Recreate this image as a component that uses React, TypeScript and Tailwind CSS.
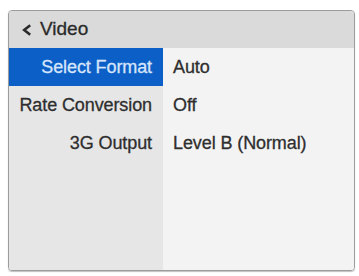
const rows = [
  { label: 'Select Format', value: 'Auto', selected: true },
  { label: 'Rate Conversion', value: 'Off' },
  { label: '3G Output', value: 'Level B (Normal)' },
]

export default function App() {
  return (
    <div
      className="h-[276px] w-[359px] bg-white pl-[8px] pt-[10px]"
      style={{ fontFamily: '"Liberation Sans", Arial, sans-serif' }}
    >
      <div className="flex h-[261px] w-[347px] flex-col overflow-hidden rounded-[4px] border border-[#9c9c9c] shadow-[0_1px_1px_rgba(0,0,0,0.25)] [-webkit-text-stroke:0.3px_currentColor]">
        <div className="flex h-[37px] shrink-0 items-center gap-[8px] bg-[#dadada] pl-[13px] text-[19px] text-[#2a2a2a]">
          <svg width="10" height="12" viewBox="0 0 10 12" fill="none" aria-hidden="true">
            <path d="M8.2 1.3 2.2 6l6 4.7" stroke="#2a2a2a" strokeWidth="2.6" />
          </svg>
          <span>Video</span>
        </div>
        <div className="flex flex-1">
          <div className="flex w-[154px] flex-col bg-[#e6e6e6]">
            {rows.map((r) => (
              <div
                key={r.label}
                className={`flex h-[38px] items-center justify-end pr-[11px] text-[18px] tracking-[-0.1px] ${
                  r.selected ? 'bg-[#0b5fc6] text-[#d6e5fb]' : 'text-[#2e2e2e]'
                }`}
              >
                {r.label}
              </div>
            ))}
          </div>
          <div className="flex flex-1 flex-col bg-[#f3f3f3]">
            {rows.map((r) => (
              <div key={r.label} className="flex h-[38px] items-center pl-[10px] text-[18px] tracking-[-0.1px] text-[#2e2e2e]">
                {r.value}
              </div>
            ))}
          </div>
        </div>
      </div>
    </div>
  )
}
